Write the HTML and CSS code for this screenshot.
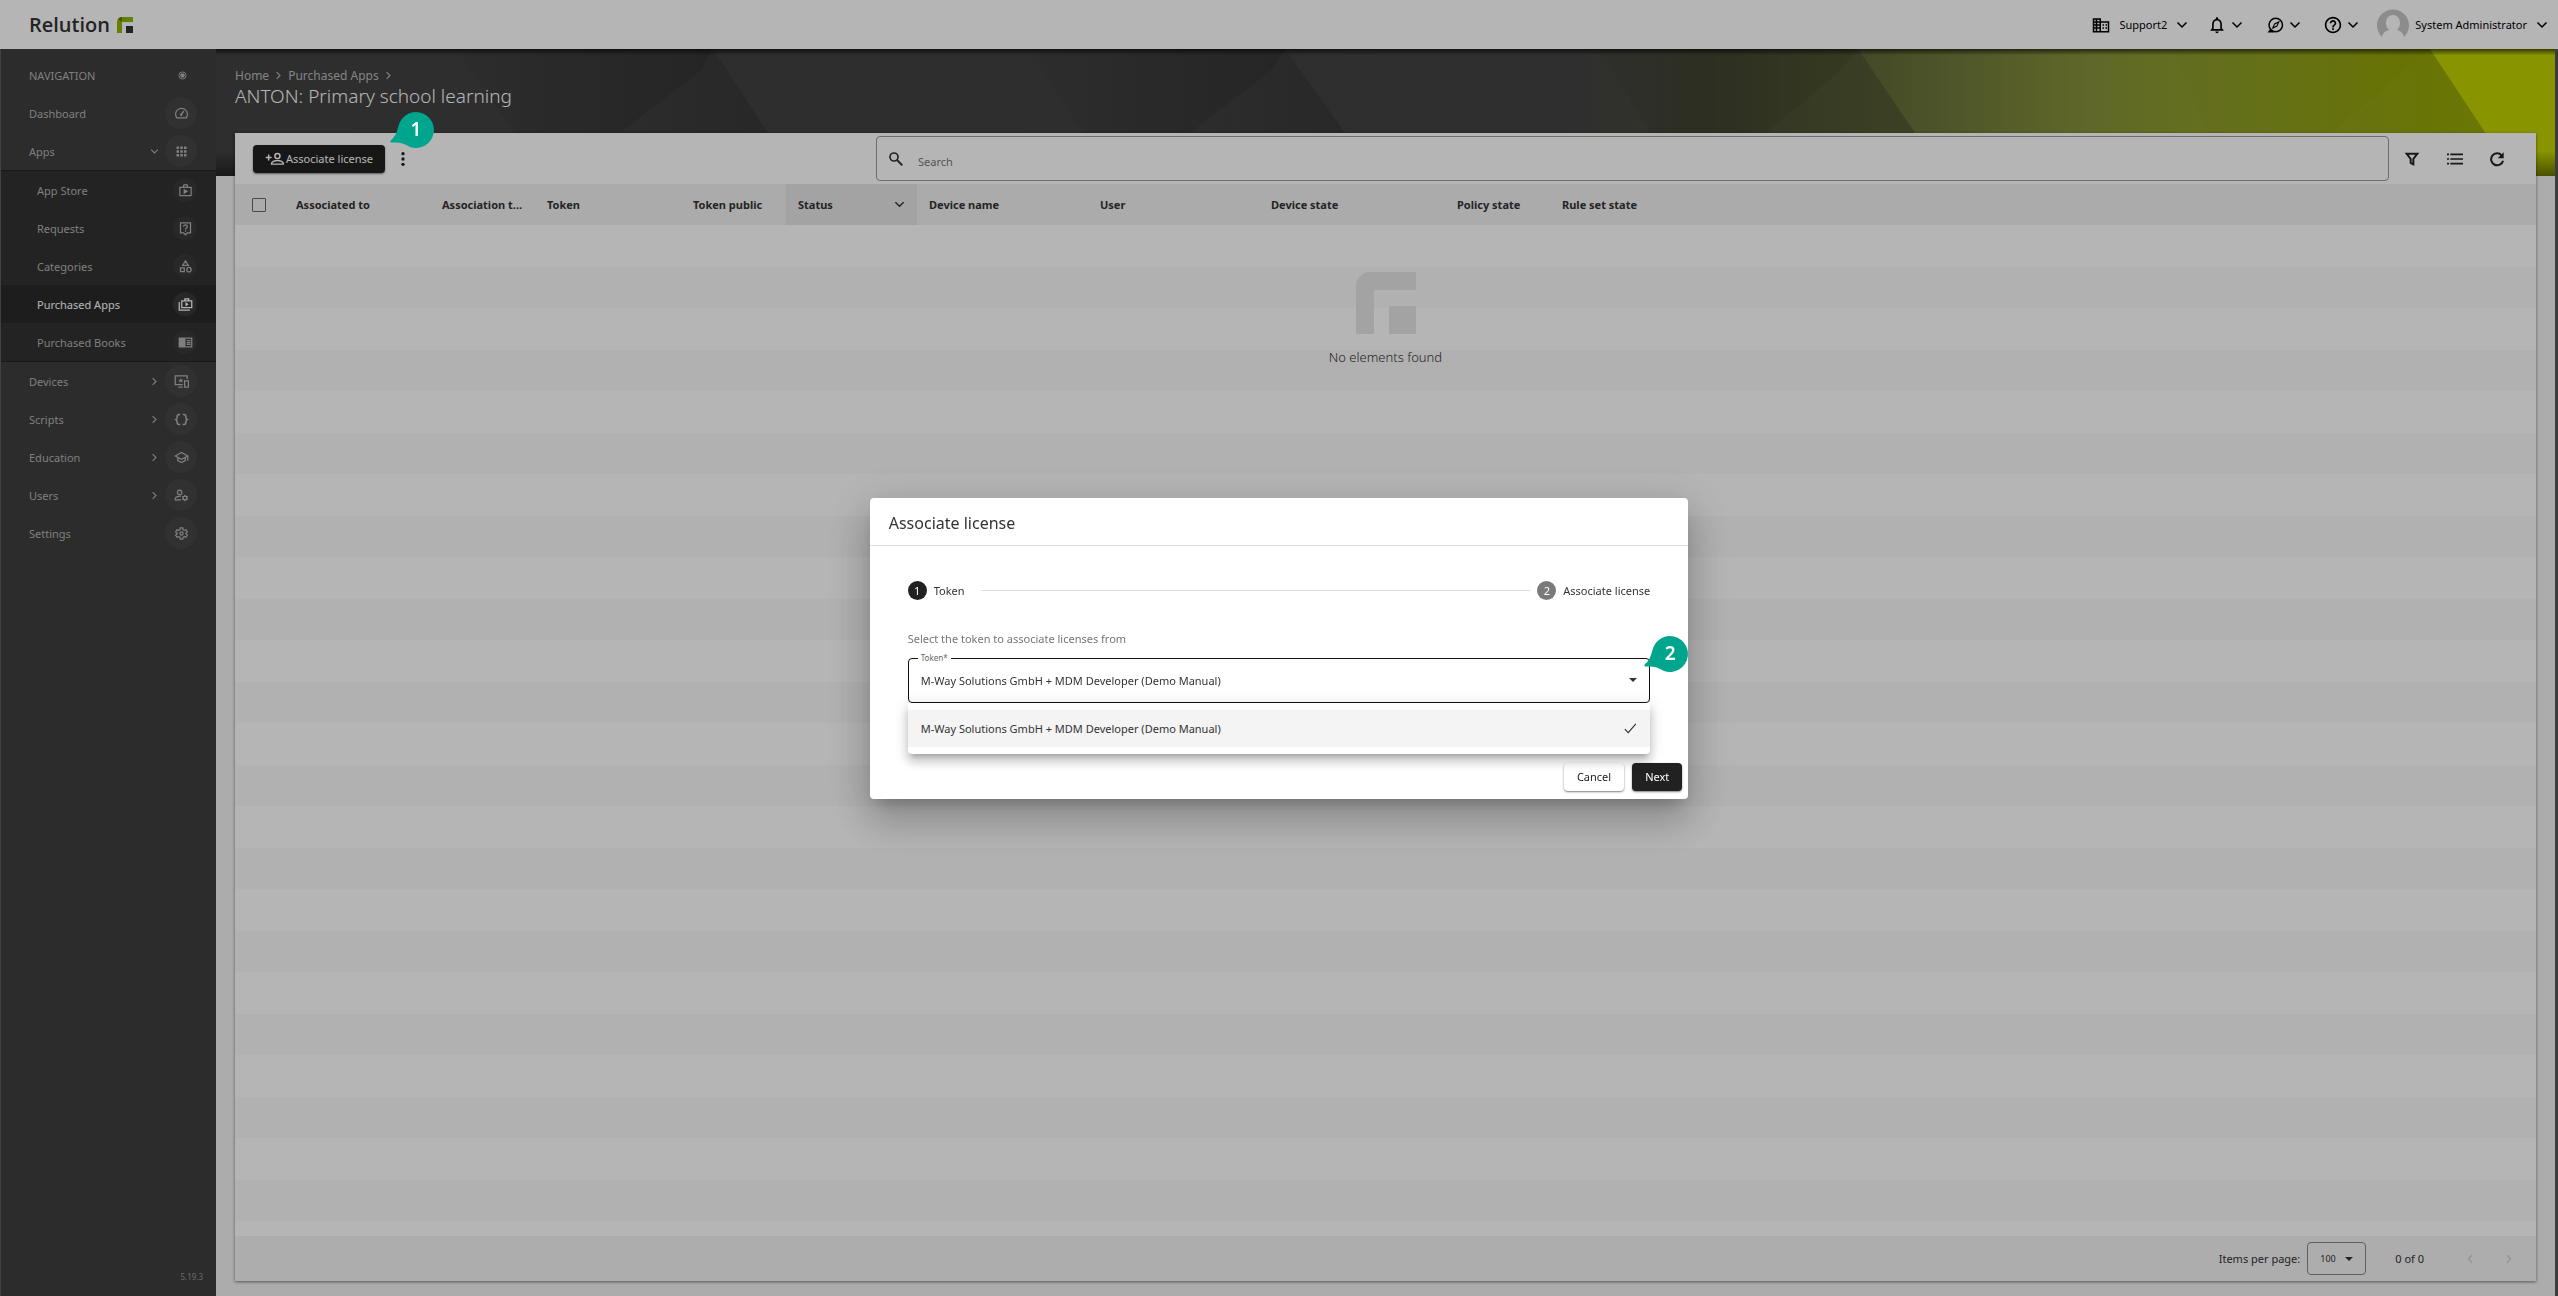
FILE: index.html
```html
<!DOCTYPE html>
<html lang="en">
<head>
    <meta charset="UTF-8">
    <meta name="viewport" content="width=device-width, initial-scale=1.0">
    <title>Relution</title>
    <link rel="stylesheet" href="styles.css">
</head>
<body>
    <!-- Shared icons -->
    <svg class="sprite" aria-hidden="true">
        <symbol id="down" viewBox="0 0 24 24"><path d="M3 7l9 9 9-9" fill="none" stroke="currentColor" stroke-width="3"/></symbol>
        <symbol id="right" viewBox="0 0 24 24"><path d="M7 3l9 9-9 9" fill="none" stroke="currentColor" stroke-width="3"/></symbol>
        <symbol id="left" viewBox="0 0 24 24"><path d="M17 3l-9 9 9 9" fill="none" stroke="currentColor" stroke-width="3"/></symbol>
        <symbol id="callout" viewBox="0 0 44 38"><path d="M26 1a18 18 0 1 1-6 35C14 32 9 31 2 31.500c-2 .1-2-1.500-.8-2.500C6 25 7 20 8.500 15A18 18 0 0 1 26 1z" fill="currentColor"/></symbol>
        <symbol id="briefcase" viewBox="0 0 24 24"><path d="M16 6V4c0-1.100-.9-2-2-2h-4c-1.100 0-2 .9-2 2v2H2v13c0 1.100.9 2 2 2h16c1.100 0 2-.9 2-2V6h-6zm-6-2h4v2h-4V4zm10 15H4V8h16v11zM9 18l7.500-5L9 9v9z" fill="currentColor"/></symbol>
    </svg>

    <div class="app">
        <header class="topbar">
            <a href="#" class="brand">Relution
                <svg viewBox="0 0 16 16"><path d="M0 16V5a5 5 0 0 1 5-5h11v5H5v11z" fill="#8fb400"/><path d="M5 0v5l-4-3a5 5 0 0 1 4-2z" fill="#5c7a00"/><path d="M9 9h7v7H9z" fill="#333"/></svg>
            </a>
            <button class="top-item tenant">
                <svg class="icon-lg" viewBox="0 0 24 24"><path d="M1 3h11v4h11v15H1zM3 5v2h2V5zm4 0v2h3V5zM3 9v2h2V9zm4 0v2h3V9zm-4 4v2h2v-2zm4 0v2h3v-2zm-4 4v3h2v-3zm4 0v3h3v-3zm5-8v11h9V9zm2 2h2v2h-2zm4 0h2v2h-2zm-4 4h2v2h-2zm4 0h2v2h-2z" fill="currentColor" fill-rule="evenodd"/></svg>
                <span>Support2</span>
                <svg class="chev"><use href="#down"/></svg>
            </button>
            <button class="top-item" aria-label="Notifications">
                <svg class="icon-lg" viewBox="1 1 22 22"><path d="M12 22c1.100 0 2-.9 2-2h-4c0 1.100.9 2 2 2zm6-6v-5c0-3.070-1.630-5.640-4.500-6.320V4c0-.83-.67-1.500-1.500-1.500s-1.500.67-1.500 1.500v.68C7.640 5.360 6 7.920 6 11v5l-2 2v1h16v-1l-2-2zm-2 1H8v-6c0-2.480 1.510-4.500 4-4.500s4 2.020 4 4.500v6z" fill="currentColor"/></svg>
                <svg class="chev"><use href="#down"/></svg>
            </button>
            <button class="top-item" aria-label="Activity">
                <svg class="icon-lg" viewBox="0 0 24 24"><circle cx="13" cy="12" r="9" fill="none" stroke="currentColor" stroke-width="2"/><path d="M6 17l-4 5h9" fill="currentColor"/><path d="M17 8l-2.500 5.500L9 16l2.500-5.500z" fill="none" stroke="currentColor" stroke-width="1.500"/></svg>
                <svg class="chev"><use href="#down"/></svg>
            </button>
            <button class="top-item help" aria-label="Help">
                <svg class="icon-lg" viewBox="1 1 22 22"><path d="M11 18h2v-2h-2v2zm1-16C6.480 2 2 6.480 2 12s4.480 10 10 10 10-4.480 10-10S17.520 2 12 2zm0 18c-4.410 0-8-3.590-8-8s3.590-8 8-8 8 3.590 8 8-3.590 8-8 8zm0-14c-2.210 0-4 1.790-4 4h2c0-1.100.9-2 2-2s2 .9 2 2c0 2-3 1.750-3 5h2c0-2.250 3-2.500 3-5 0-2.210-1.790-4-4-4z" fill="currentColor"/></svg>
                <svg class="chev"><use href="#down"/></svg>
            </button>
            <button class="top-item account">
                <svg class="avatar" viewBox="0 0 32 32"><path d="M5 28a16 16 0 1 1 22 0c-1-4-3-6-7-7 2-2 3-4 3-7 0-5-3-8-7-8s-7 3-7 8c0 3 1 5 3 7-4 1-6 3-7 7z" fill="#c6c6c6"/></svg>
                <span>System Administrator</span>
                <svg class="chev"><use href="#down"/></svg>
            </button>
        </header>

        <nav class="sidebar">
            <div class="nav-row nav-head"><span>NAVIGATION</span><svg viewBox="0 0 10 10"><circle cx="5" cy="5" r="4" fill="none" stroke="currentColor"/><circle cx="5" cy="5" r="2.500" fill="currentColor"/></svg></div>
            <a href="#" class="nav-row"><span>Dashboard</span>
                <i><svg viewBox="0 0 24 24"><path d="M4.500 19a9.500 9.500 0 1 1 15 0zM11 14l5-6" fill="none" stroke="currentColor" stroke-width="2"/><circle cx="11.500" cy="14" r="2" fill="currentColor"/></svg></i></a>
            <a href="#" class="nav-row"><span>Apps</span><svg class="nav-chev"><use href="#down"/></svg>
                <i><svg viewBox="0 0 24 24"><path d="M4 8h4V4H4zm6 12h4v-4h-4zm-6 0h4v-4H4zm0-6h4v-4H4zm6 0h4v-4h-4zm6-10v4h4V4zm-6 4h4V4h-4zm6 6h4v-4h-4zm0 6h4v-4h-4z" fill="currentColor"/></svg></i></a>
            <div class="subnav">
                <a href="#" class="nav-row"><span>App Store</span><i><svg><use href="#briefcase"/></svg></i></a>
                <a href="#" class="nav-row"><span>Requests</span>
                    <i><svg viewBox="0 0 24 24"><path d="M4 3h16v16h-5l-3 3-3-3H4z" fill="none" stroke="currentColor" stroke-width="2"/><path d="M9 9c0-4 6-4 6 0 0 2-3 2-3 5M12 15v2" fill="none" stroke="currentColor" stroke-width="2"/></svg></i></a>
                <a href="#" class="nav-row"><span>Categories</span>
                    <i><svg viewBox="0 0 24 24"><path d="M12 3l4.500 7h-9zM4 14h6v6H4z" fill="none" stroke="currentColor" stroke-width="2"/><circle cx="17.500" cy="17" r="3.500" fill="none" stroke="currentColor" stroke-width="2"/></svg></i></a>
                <a href="#" class="nav-row active"><span>Purchased Apps</span>
                    <i><svg viewBox="0 0 24 24"><path d="M2 8v13h17M6 6h16v11H6zM11 6V3h6v3" fill="none" stroke="currentColor" stroke-width="2"/><path d="M12 8v7l5-3.500z" fill="currentColor"/></svg></i></a>
                <a href="#" class="nav-row"><span>Purchased Books</span>
                    <i><svg viewBox="0 0 24 24"><path d="M1 4h11v16H1z" fill="currentColor"/><path d="M12 5h10v14H12M14 9h6M14 12h6M14 15h6" fill="none" stroke="currentColor" stroke-width="2"/></svg></i></a>
            </div>
            <a href="#" class="nav-row"><span>Devices</span><svg class="nav-chev"><use href="#right"/></svg>
                <i><svg viewBox="0 0 24 24"><path d="M14 17H2V3h19v5M7 21h7M17 11h6v10h-6z" fill="none" stroke="currentColor" stroke-width="2"/><path d="M11 6l1 3h3l-2 2 1 3-3-2-3 2 1-3-2-2h3z" fill="currentColor"/></svg></i></a>
            <a href="#" class="nav-row"><span>Scripts</span><svg class="nav-chev"><use href="#right"/></svg>
                <i><svg viewBox="0 0 24 24"><path d="M10 4H8C5 4 5 6 5 8s0 3-2 4c2 1 2 2 2 4s0 4 3 4h2M14 4h2c3 0 3 2 3 4s0 3 2 4c-2 1-2 2-2 4s0 4-3 4h-2" fill="none" stroke="currentColor" stroke-width="2.500"/></svg></i></a>
            <a href="#" class="nav-row"><span>Education</span><svg class="nav-chev"><use href="#right"/></svg>
                <i><svg viewBox="0 0 24 24"><path d="M12 4L2 9.500 12 15l10-5.500zM6 12v5l6 3 6-3v-5M22 9v8" fill="none" stroke="currentColor" stroke-width="2"/></svg></i></a>
            <a href="#" class="nav-row"><span>Users</span><svg class="nav-chev"><use href="#right"/></svg>
                <i><svg viewBox="0 0 24 24"><circle cx="9" cy="7" r="3.500" fill="none" stroke="currentColor" stroke-width="2"/><path d="M11 19H2v-2c0-2 4-4 9-4" fill="none" stroke="currentColor" stroke-width="2"/><circle cx="17.500" cy="16" r="3" fill="none" stroke="currentColor" stroke-width="2"/><path d="M17.500 11v2M17.500 19v2M13 13.500l2 1M20 17.500l2 1M22 13.500l-2 1M15 17.500l-2 1" stroke="currentColor" stroke-width="2"/></svg></i></a>
            <a href="#" class="nav-row"><span>Settings</span>
                <i><svg viewBox="0 0 24 24"><path d="M10 3h4l.5 3 2 1 2.800-1 2 3.500L19 11.500v1l2.300 2-2 3.500-2.800-1-2 1-.5 3h-4l-.5-3-2-1-2.800 1-2-3.500 2.300-2v-1l-2.300-2 2-3.500 2.800 1 2-1z" fill="none" stroke="currentColor" stroke-width="2"/><circle cx="12" cy="12" r="2.500" fill="none" stroke="currentColor" stroke-width="2"/></svg></i></a>
            <small class="version">5.19.3</small>
        </nav>

        <main class="content">
            <!-- Banner artwork -->
            <svg class="banner" viewBox="0 0 2339 127" preserveAspectRatio="none" aria-hidden="true">
                <defs>
                    <linearGradient id="bg"><stop offset="0" stop-color="#414141"/><stop offset=".58" stop-color="#434343"/><stop offset=".64" stop-color="#474b36"/><stop offset=".74" stop-color="#6f783a"/><stop offset=".8" stop-color="#86923a"/><stop offset=".88" stop-color="#95a522"/><stop offset=".95" stop-color="#9eb000"/><stop offset="1" stop-color="#aabc00"/></linearGradient>
                    <linearGradient id="shade"><stop offset="0" stop-color="#000" stop-opacity=".03"/><stop offset="1" stop-color="#000" stop-opacity=".24"/></linearGradient>
                    <linearGradient id="edge" x2="0" y2="1"><stop offset="0" stop-color="#000" stop-opacity=".6"/><stop offset=".05" stop-color="#000" stop-opacity="0"/><stop offset=".8" stop-color="#000" stop-opacity="0"/><stop offset="1" stop-color="#000" stop-opacity=".45"/></linearGradient>
                </defs>
                <path d="M0 0h2339v127H0z" fill="url(#bg)"/>
                <path d="M239 0h258l55 84v43H329l-30-43z" fill="url(#shade)"/>
                <path d="M811 0h258l60 84v43H901l-34-43z" fill="url(#shade)"/>
                <path d="M1384 0h258l57 84v43h-235l-30-43z" fill="url(#shade)"/>
                <path d="M1956 0h258l84 127h-288z" fill="url(#shade)" opacity=".4"/>
                <path d="M484 22L404 84h148L497 0zM1054 22l-80 62h155L1069 0zM1624 22l-75 62h150L1642 0zM2214 0l-94 80-50 47h228z" fill="#fff" fill-opacity=".03"/>
                <path d="M2214 0h125v127h-41z" fill="#c0d200"/>
                <path d="M0 0h2339v127H0z" fill="url(#edge)"/>
            </svg>
            <div class="page-head">
                <div class="crumbs"><a href="#">Home</a><svg><use href="#right"/></svg><a href="#">Purchased Apps</a><svg><use href="#right"/></svg></div>
                <h1>ANTON: Primary school learning</h1>
            </div>

            <section class="panel">
                <div class="toolbar">
                    <div class="actions">
                        <button class="btn btn-dark btn-associate">
                            <svg viewBox="0 0 26 24"><circle cx="17" cy="8" r="3.500" fill="none" stroke="currentColor" stroke-width="2"/><path d="M9 19v-1c0-2 4-4 8-4s8 2 8 4v1zM5 6v8M1 10h8" fill="none" stroke="currentColor" stroke-width="2"/></svg>
                            Associate license
                        </button>
                        <button class="icon-btn" aria-label="More"><svg viewBox="0 0 24 24"><g fill="currentColor"><circle cx="12" cy="4" r="2.500"/><circle cx="12" cy="12" r="2.500"/><circle cx="12" cy="20" r="2.500"/></g></svg></button>
                    </div>
                    <label class="search">
                        <svg viewBox="0 0 24 24"><circle cx="9" cy="9" r="6" fill="none" stroke="currentColor" stroke-width="2.500"/><path d="M13.500 13.500l8 8" stroke="currentColor" stroke-width="3"/></svg>
                        <input type="text" placeholder="Search" aria-label="Search">
                    </label>
                    <div class="tools">
                        <button class="icon-btn" aria-label="Filter"><svg viewBox="0 0 24 24"><path d="M4 4h16l-6 8v8l-4-2v-6z" fill="none" stroke="currentColor" stroke-width="3"/></svg></button>
                        <button class="icon-btn" aria-label="List"><svg viewBox="0 0 24 24"><path d="M0 5h3M0 12h3M0 19h3M5 5h19M5 12h19M5 19h19" stroke="currentColor" stroke-width="2.500"/></svg></button>
                        <button class="icon-btn" aria-label="Refresh"><svg viewBox="0 0 24 24"><path d="M19 6.500a9 9 0 1 0 2 8" fill="none" stroke="currentColor" stroke-width="3"/><path d="M22 2v9h-9z" fill="currentColor"/></svg></button>
                    </div>
                </div>

                <table>
                    <thead>
                        <tr>
                            <th class="c-check"><input type="checkbox" aria-label="Select all"></th>
                            <th class="c-assoc">Associated to</th>
                            <th class="c-type">Association type</th>
                            <th class="c-assoc">Token</th>
                            <th class="c-type">Token public</th>
                            <th class="c-status"><div>Status <svg><use href="#down"/></svg></div></th>
                            <th class="c-name">Device name</th>
                            <th class="c-user">User</th>
                            <th class="c-state">Device state</th>
                            <th class="c-policy">Policy state</th>
                            <th>Rule set state</th>
                        </tr>
                    </thead>
                </table>
                <div class="rows">
                    <svg viewBox="0 0 60 62"><path d="M0 62V14A14 14 0 0 1 14 0h46v18H18v44zM33 34h27v28H33z" fill="currentColor"/></svg>
                    <p>No elements found</p>
                </div>
                <footer class="paging">
                    <label for="size">Items per page:</label>
                    <div class="select-box size-box">
                        <select id="size"><option>100</option></select>
                    </div>
                    <span class="range">0 of 0</span>
                    <button class="icon-btn" disabled aria-label="Previous"><svg><use href="#left"/></svg></button>
                    <button class="icon-btn" disabled aria-label="Next page"><svg><use href="#right"/></svg></button>
                </footer>
            </section>
        </main>
    </div>

    <div class="overlay">
        <div class="dialog" role="dialog" aria-labelledby="dialogTitle">
            <h2 id="dialogTitle">Associate license</h2>
            <form class="dialog-body">
                <div class="stepper">
                    <b class="step-no">1</b><span>Token</span>
                    <hr>
                    <b class="step-no pending">2</b><span>Associate license</span>
                </div>
                <p class="hint">Select the token to associate licenses from</p>
                <div class="field">
                    <label for="token">Token*</label>
                    <div class="select-box">
                        <select id="token"><option>M-Way Solutions GmbH + MDM Developer (Demo Manual)</option></select>
                    </div>
                    <div class="options" role="listbox" aria-label="Token">
                        <div class="option" role="option" aria-selected="true">M-Way Solutions GmbH + MDM Developer (Demo Manual)
                            <svg viewBox="0 0 24 24"><path d="M3 14l6 6L22 5" fill="none" stroke="currentColor" stroke-width="2"/></svg></div>
                    </div>
                    <div class="callout callout-field"><svg><use href="#callout"/></svg><span>2</span></div>
                </div>
            </form>
            <div class="dialog-actions">
                <button class="btn">Cancel</button>
                <button class="btn btn-dark">Next</button>
            </div>
        </div>
    </div>
    <div class="callout callout-button"><svg><use href="#callout"/></svg><span>1</span></div>
</body>
</html>
```
FILE: styles.css
```css
* {
    box-sizing: border-box;
}
body {
    margin: 0;
    font-family: "Noto Sans", sans-serif;
    font-size: 11px;
    color: #333;
}
button, input, select {
    font: inherit;
    color: inherit;
}
button {
    padding: 0;
    background: none;
    border: none;
    cursor: pointer;
}
a {
    color: inherit;
    text-decoration: none;
}
.sprite {
    display: none;
}
.app {
    display: grid;
    grid-template: 49px 1fr / 216px 1fr;
    height: 100vh;
    min-height: 800px;
    background: #f3f3f3;
}

/* Top bar */
.topbar {
    grid-column: 1 / 3;
    display: flex;
    align-items: center;
    padding: 0 10px 0 29px;
    background: #fff;
    color: #000;
}
.brand {
    display: flex;
    align-items: center;
    gap: 7px;
    margin-right: auto;
    font-family: "Open Sans", sans-serif;
    font-size: 20px;
    font-weight: 600;
    color: #333;
}
.brand svg {
    width: 16px;
    height: 16px;
}
.top-item {
    display: flex;
    align-items: center;
    gap: 5px;
    margin-right: 23px;
}
.top-item svg {
    flex: none;
}
.tenant {
    gap: 9px;
    margin-right: 20px;
}
.help {
    margin-right: 18px;
}
.account {
    gap: 6px;
    margin: 0;
}
.icon-lg {
    width: 18px;
    height: 18px;
}
.chev {
    width: 12px;
    height: 12px;
}
.account .chev {
    margin-left: 3px;
}
.avatar {
    width: 32px;
    height: 32px;
}

/* Sidebar */
.sidebar {
    display: flex;
    flex-direction: column;
    padding-top: 7px;
    background: #3e3e3e;
    border-left: 1px solid #5c5c5c;
    color: #b4b4b4;
}
.nav-row {
    display: flex;
    align-items: center;
    height: 38px;
    padding: 0 19px 0 28px;
}
.nav-row span {
    margin-right: auto;
}
.nav-head {
    padding-right: 29px;
}
.nav-head svg {
    width: 9px;
    height: 9px;
}
.nav-chev {
    width: 9px;
    height: 9px;
    margin-right: 6px;
}
.nav-row i {
    display: flex;
    align-items: center;
    justify-content: center;
    width: 32px;
    height: 32px;
    border-radius: 50%;
    background: #464646;
}
.nav-row i svg {
    width: 15px;
    height: 15px;
}
.subnav {
    background: #323232;
    border-top: 1px solid #242424;
    border-bottom: 1px solid #242424;
}
.subnav .nav-row {
    padding-left: 36px;
}
.subnav .nav-row i {
    width: 24px;
    height: 24px;
    background: #393939;
}
.subnav .active {
    background: #2a2a2a;
    color: #fff;
}
.version {
    margin: auto 13px 14px auto;
    font-size: 8px;
    color: #999;
}

/* Content */
.content {
    position: relative;
    display: flex;
    flex-direction: column;
    min-width: 0;
    padding: 17px 19px 15px;
    border-right: 3px solid #555;
}
.banner {
    position: absolute;
    top: 0;
    left: 0;
    width: 100%;
    height: 127px;
}
.page-head {
    position: relative;
    height: 67px;
    color: #fff;
}
.crumbs {
    display: flex;
    align-items: center;
    gap: 5px;
    height: 18px;
    font-size: 12px;
    color: #bbb;
}
.crumbs svg {
    width: 9px;
    height: 9px;
}
h1 {
    margin: 0;
    font-size: 19px;
    font-weight: 300;
    line-height: 24px;
}
.panel {
    position: relative;
    display: flex;
    flex: 1;
    flex-direction: column;
    background: #fff;
    box-shadow: 0 1px 3px rgba(0, 0, 0, 0.5);
}
.toolbar {
    display: grid;
    grid-template-columns: 608px 1fr 101px;
    align-items: center;
    gap: 15px;
    height: 51px;
    padding: 0 31px 0 18px;
}
.actions {
    display: flex;
    align-items: center;
    gap: 10px;
}
.tools {
    display: flex;
    justify-content: space-between;
}
.btn {
    height: 28px;
    padding: 0 13px;
    border-radius: 4px;
    background: #fff;
    box-shadow: 0 1px 2px rgba(0, 0, 0, 0.5);
    color: #222;
}
.btn-dark {
    background: #212121;
    color: #fff;
}
.btn-associate {
    display: flex;
    align-items: center;
    gap: 2px;
    padding: 0 12px;
}
.btn-associate svg {
    width: 19px;
    height: 18px;
}
.icon-btn {
    width: 16px;
    height: 16px;
    color: #222;
}
.icon-btn svg {
    display: block;
    width: 100%;
    height: 100%;
}
.icon-btn:disabled {
    color: #ccc;
}
.icon-btn:disabled svg {
    height: 10px;
}
.search {
    display: flex;
    align-items: center;
    gap: 14px;
    height: 45px;
    padding: 0 11px;
    border: 1px solid #9a9a9a;
    border-radius: 4px;
}
.search svg {
    width: 16px;
    height: 16px;
}
.search input {
    flex: 1;
    padding: 5px 0 0;
    border: none;
    outline: none;
    background: none;
}
.search input::placeholder {
    color: #777;
}

/* Table */
table {
    width: 100%;
    table-layout: fixed;
    border-collapse: collapse;
    background: #f1f1f1;
}
th {
    height: 41px;
    padding: 0 12px;
    overflow: hidden;
    text-align: left;
    text-overflow: ellipsis;
    white-space: nowrap;
}
.c-check {
    width: 49px;
    padding: 0 0 0 17px;
}
.c-check input {
    display: block;
    appearance: none;
    width: 14px;
    height: 14px;
    margin: 0;
    border: 1px solid #666;
    border-radius: 1px;
}
.c-assoc {
    width: 146px;
}
.c-type {
    width: 105px;
}
.c-status {
    width: 131px;
    background: #e6e6e6;
}
.c-status div {
    display: flex;
    align-items: center;
    justify-content: space-between;
}
.c-status svg {
    width: 11px;
    height: 11px;
}
.c-name, .c-user {
    width: 171px;
}
.c-state {
    width: 186px;
}
.c-policy {
    width: 105px;
}
.rows {
    flex: 1;
    display: flex;
    flex-direction: column;
    align-items: center;
    padding-top: 47px;
    background: linear-gradient(#fff 50%, #f9f9f9 50%) 0 0 / 100% 83px;
}
.rows svg {
    width: 60px;
    height: 62px;
    color: #e6e6e6;
}
.rows p {
    margin: 14px 0;
    font-size: 13px;
    font-weight: 300;
}
.paging {
    display: flex;
    align-items: center;
    justify-content: flex-end;
    height: 45px;
    padding-right: 19px;
    background: #f4f4f4;
}
.size-box {
    width: 59px;
    height: 33px;
    margin: 0 29px 0 7px;
    border: 1px solid #888;
    border-radius: 4px;
    font-size: 9px;
}
.range {
    margin-right: 38px;
}
.paging .icon-btn {
    margin-left: 23px;
}
.paging .range + .icon-btn {
    margin-left: 0;
}

/* Drop-downs */
.select-box {
    position: relative;
}
.select-box::after {
    content: "";
    position: absolute;
    top: 50%;
    right: 12px;
    border: 4px solid transparent;
    border-top-color: currentColor;
    border-bottom: none;
    pointer-events: none;
    transform: translateY(-50%);
}
.select-box select {
    appearance: none;
    width: 100%;
    height: 100%;
    padding: 0 12px;
    border: none;
    outline: none;
    background: none;
}

/* Dialog */
.overlay {
    position: fixed;
    inset: 0;
    display: flex;
    align-items: center;
    justify-content: center;
    background: rgba(0, 0, 0, 0.29);
}
.dialog {
    width: 32%;
    min-width: 600px;
    border-radius: 4px;
    background: #fff;
    box-shadow: 0 11px 15px -7px rgba(0, 0, 0, 0.2), 0 24px 38px 3px rgba(0, 0, 0, 0.14), 0 9px 46px 8px rgba(0, 0, 0, 0.12);
}
h2 {
    margin: 0;
    padding: 3px 19px 0;
    border-bottom: 1px solid #ddd;
    font-size: 16px;
    font-weight: 400;
    line-height: 44px;
}
.dialog-body {
    padding: 32px 38px 0;
}
.stepper {
    display: flex;
    align-items: center;
    gap: 7px;
    height: 25px;
}
.stepper hr {
    flex: 1;
    margin: 0 0 0 9px;
    border: none;
    border-top: 1px solid #ddd;
}
.step-no {
    width: 19px;
    height: 19px;
    border-radius: 50%;
    background: #212121;
    color: #fff;
    font-weight: 400;
    line-height: 19px;
    text-align: center;
}
.pending {
    background: #7a7a7a;
}
.hint {
    margin: 28px 0 11px;
    line-height: 16px;
    color: #757575;
}
.field {
    position: relative;
    height: 45px;
}
.field > label {
    position: absolute;
    z-index: 1;
    top: -7px;
    left: 10px;
    padding: 0 3px;
    background: #fff;
    font-size: 8px;
    line-height: 14px;
    color: #666;
}
.field .select-box {
    height: 45px;
    border: 1px solid #111;
    border-radius: 4px;
}
.options {
    position: absolute;
    top: 100%;
    width: 100%;
    padding: 7px 0;
    border-radius: 0 0 4px 4px;
    background: #fff;
    box-shadow: 0 5px 5px -3px rgba(0, 0, 0, 0.2), 0 8px 10px 1px rgba(0, 0, 0, 0.14), 0 3px 14px 2px rgba(0, 0, 0, 0.12);
}
.option {
    display: flex;
    align-items: center;
    justify-content: space-between;
    height: 37px;
    padding: 0 13px;
    background: #f4f4f4;
}
.option svg {
    width: 14px;
    height: 14px;
}
.dialog-actions {
    display: flex;
    justify-content: flex-end;
    gap: 8px;
    padding: 60px 6px 8px;
}

/* Numbered callouts */
.callout {
    position: absolute;
    width: 44px;
    height: 38px;
    color: #00a58e;
}
.callout svg {
    display: block;
    width: 100%;
    height: 100%;
}
.callout span {
    position: absolute;
    top: 0;
    left: 8px;
    width: 36px;
    color: #fff;
    font-size: 19px;
    font-weight: 600;
    line-height: 36px;
    text-align: center;
}
.callout-button {
    top: 111px;
    left: 390px;
}
.callout-field {
    top: -23px;
    right: -38px;
}
```
